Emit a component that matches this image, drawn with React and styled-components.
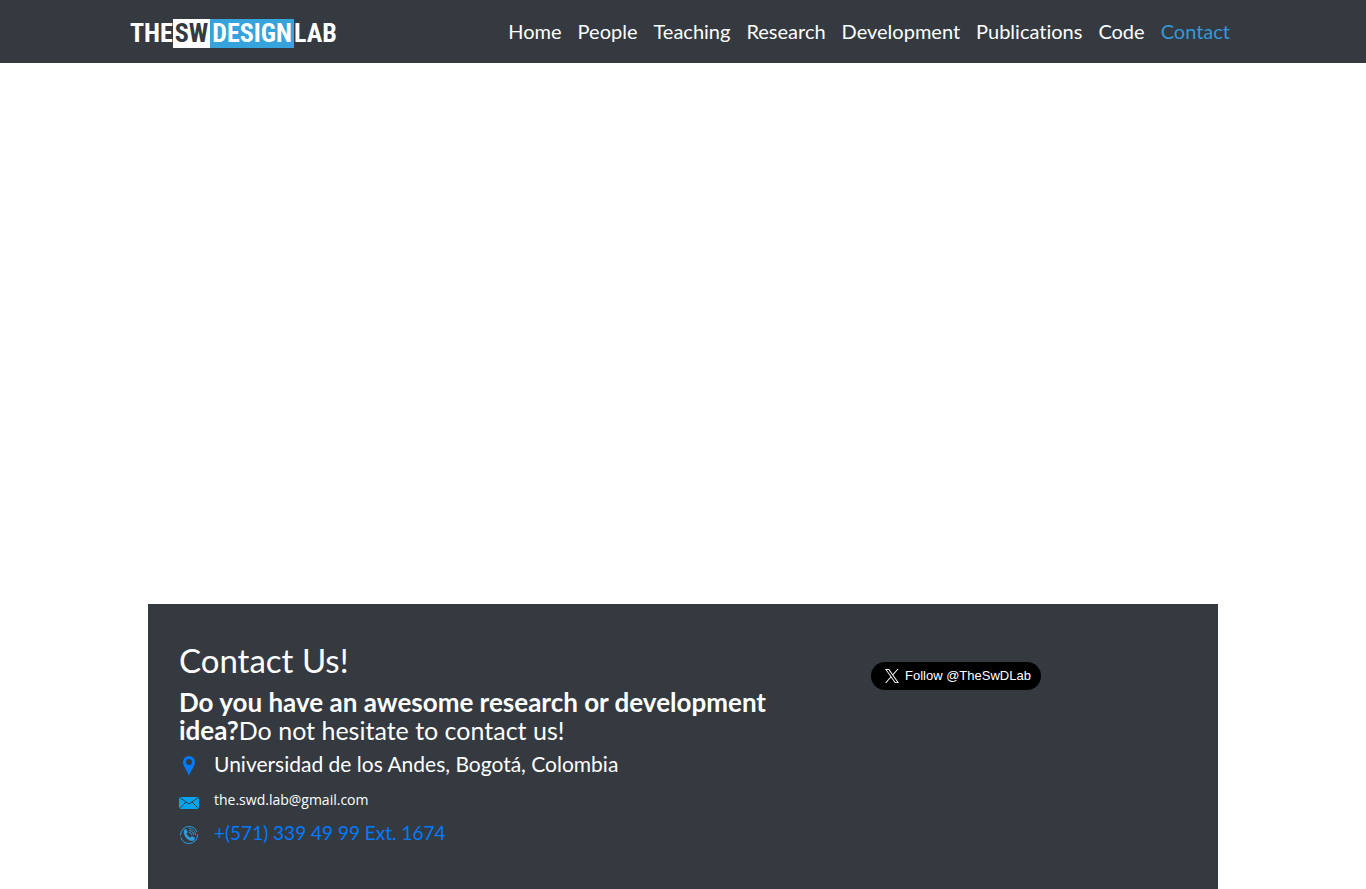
import React from "react";
import styled, { createGlobalStyle } from "styled-components";

const GlobalStyle = createGlobalStyle`
  *, *::before, *::after { box-sizing: border-box; }
  html, body { margin: 0; }
  body {
    background: #fff;
    color: #fff;
    font-family: Lato, "Open Sans", sans-serif;
    font-size: 20px;
    font-variant-ligatures: none;
    line-height: 24px;
  }
  #root { min-height: 100vh; display: flex; }
`;

const Page = styled.div`
  flex: 1;
  min-width: 0;
  min-height: 100vh;
  display: flex;
  flex-direction: column;
`;

const Header = styled.header`
  background: #343a40;
`;

const HeaderInner = styled.div`
  max-width: 1140px;
  min-height: 63px;
  margin: 0 auto;
  padding: 0 15px;
  display: flex;
  flex-wrap: wrap;
  align-items: center;
  justify-content: space-between;
`;

const Brand = styled.a`
  display: flex;
  padding: 4px 0 0 2px;
  color: #fff;
  font: bold 26px/29px "Roboto Condensed", "Open Sans Condensed", Roboto, sans-serif;
  text-decoration: none;
`;

const BrandPart = styled.span`
  padding: 0 ${({ $fill }) => ($fill ? 2 : 0)}px;
  text-align: center;
  background: ${({ $fill }) => $fill || "transparent"};
  color: ${({ $ink }) => $ink || "#fff"};
`;

const NavList = styled.ul`
  display: flex;
  flex-wrap: wrap;
  margin: 0;
  padding: 0 0 2px;
  list-style: none;
`;

const NavLink = styled.a`
  display: block;
  padding: 8px;
  color: ${({ $active }) => ($active ? "#3498db" : "#fff")};
  text-decoration: none;
`;

const MapArea = styled.section`
  height: 541px;
`;

const Card = styled.main`
  flex: 1;
  width: calc(100% - 32px);
  max-width: 1070px;
  margin: 0 auto;
  padding: 37px 31px;
  display: flex;
  flex-wrap: wrap;
  background: #343a40;
`;

const Details = styled.div`
  flex: 0 1 692px;
  padding-right: 60px;
`;

const Title = styled.h1`
  margin: 0 0 9px;
  font-size: 33px;
  font-weight: 400;
  line-height: 38px;
`;

const Lead = styled.h2`
  margin: 0 0 7px;
  font-size: 25px;
  font-weight: 400;
  line-height: 28px;

  strong { font-size: 26px; }
`;

const ContactList = styled.address`
  display: flex;
  flex-direction: column;
  gap: 8px;
  font-style: normal;
`;

const ContactRow = styled.div`
  display: flex;
  align-items: center;
  gap: 15px;
  padding-top: ${({ $spaced }) => ($spaced ? 4 : 0)}px;
  font-size: 21px;

  svg { flex: none; margin-top: 5px; }
`;

const ContactLink = styled.a`
  color: #007bff;
  font-size: 19px;
  text-decoration: none;
`;

const MailLink = styled.a`
  color: #fff;
  font: 14px/24px "Open Sans", sans-serif;
  text-decoration: none;
`;

const Social = styled.aside`
  padding-top: 21px;
`;

const FollowButton = styled.a`
  display: flex;
  align-items: center;
  gap: 6px;
  height: 28px;
  padding: 0 10px 0 14px;
  border-radius: 14px;
  background: #000;
  color: #fff;
  font: 13px/28px "Liberation Sans", Arial, sans-serif;
  text-decoration: none;
`;

const PinIcon = () => (
  <svg width="20" height="20" viewBox="0 0 20 20" aria-hidden="true">
    <path fill="#007bff" fillRule="evenodd" d="M10 0a6 6 0 0 0-6 6c0 4.500 4.500 8.500 6 14 1.500-5.500 6-9.500 6-14a6 6 0 0 0-6-6Zm0 3a3 3 0 1 1 0 6 3 3 0 0 1 0-6Z" />
  </svg>
);

const MailIcon = () => (
  <svg width="20" height="12" viewBox="0 0 20 12" aria-hidden="true">
    <path fill="#00a4ef" d="M0 0h20v12H0z" />
    <path fill="none" stroke="#343a40" d="M0 0l10 7L20 0M0 12l7-7M20 12l-7-7" />
  </svg>
);

const PhoneIcon = () => (
  <svg width="20" height="20" viewBox="0 0 20 20" fill="none" stroke="#2d9cdb" aria-hidden="true">
    <circle cx="10" cy="10" r="8.500" strokeDasharray="24 2" />
    <path fill="#2d9cdb" stroke="none" d="M5.500 4.500 7 4l2 3-1.500 1.500c.7 1.800 2 3.200 4 4L13 11l3 2-.5 1.700c-1 1.300-2.700 1.600-4.500.8-3-1.200-5-3.500-6-6.500-.5-1.800-.4-3.500.5-4.500Z" />
    <path d="M10 7.500c1.500 0 2.500 1 2.500 2.500M10 5.500c2.700 0 4.500 1.800 4.500 4.500M10 3.500c3.700 0 6.500 2.800 6.500 6.500" />
  </svg>
);

const XIcon = () => (
  <svg width="14" height="14" viewBox="0 0 24 24" fill="#fff" aria-hidden="true">
    <path d="M14.280 10.160 23.220 0H21.100l-7.760 8.820L7.150 0H0l9.370 13.340L0 24h2.120l8.190-9.320L16.850 24H24l-9.720-13.840Zm-2.900 3.300-.95-1.330L2.880 1.560h3.260l6.090 8.530.95 1.330 7.920 11.080h-3.250l-6.470-9.040Z" />
  </svg>
);

const links = ["Home", "People", "Teaching", "Research", "Development", "Publications", "Code", "Contact"];

export default function App() {
  return (
    <>
      <GlobalStyle />
      <Page>
        <Header>
          <HeaderInner>
            <Brand href="#home" aria-label="The SW Design Lab">
              <BrandPart>THE</BrandPart>
              <BrandPart $fill="#fff" $ink="#343a40">SW</BrandPart>
              <BrandPart $fill="#36a3dc">DESIGN</BrandPart>
              <BrandPart>LAB</BrandPart>
            </Brand>
            <nav aria-label="Main">
              <NavList>
                {links.map((name) => (
                  <li key={name}>
                    <NavLink
                      href={`#${name.toLowerCase()}`}
                      $active={name === "Contact"}
                      aria-current={name === "Contact" ? "page" : undefined}
                    >
                      {name}
                    </NavLink>
                  </li>
                ))}
              </NavList>
            </nav>
          </HeaderInner>
        </Header>
        <MapArea aria-label="Map" />
        <Card>
          <Details>
            <Title>Contact Us!</Title>
            <Lead>
              <strong>Do you have an awesome research or development idea?</strong>Do not hesitate to contact us!
            </Lead>
            <ContactList>
              <ContactRow>
                <PinIcon />
                <span>Universidad de los Andes, Bogotá, Colombia</span>
              </ContactRow>
              <ContactRow $spaced>
                <MailIcon />
                <MailLink href="mailto:the.swd.lab@gmail.com">the.swd.lab@gmail.com</MailLink>
              </ContactRow>
              <ContactRow>
                <PhoneIcon />
                <ContactLink href="tel:+5713394999">+(571) 339 49 99 Ext. 1674</ContactLink>
              </ContactRow>
            </ContactList>
          </Details>
          <Social>
            <FollowButton href="#follow">
              <XIcon />
              Follow @TheSwDLab
            </FollowButton>
          </Social>
        </Card>
      </Page>
    </>
  );
}
